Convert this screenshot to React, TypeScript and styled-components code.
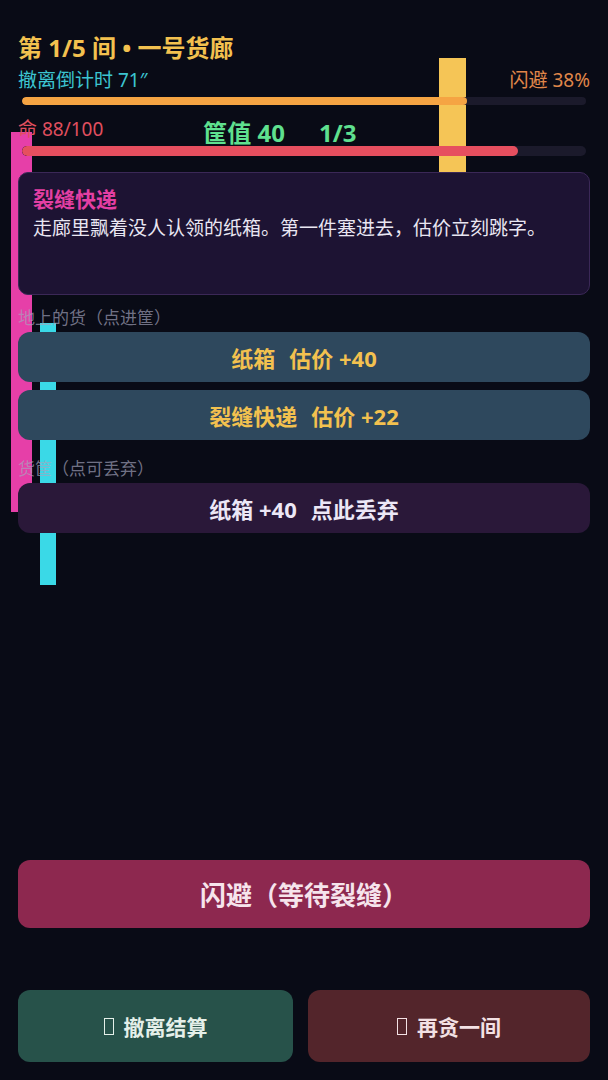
import React from "react";
import styled, { createGlobalStyle } from "styled-components";

const GlobalStyle = createGlobalStyle`
  html, body {
    margin: 0;
    padding: 0;
    background: #090b16;
  }
  body {
    font-family: "Noto Sans", "Noto Sans CJK SC", sans-serif;
    color: #e9e6f2;
  }
  * { box-sizing: border-box; }
`;

const Screen = styled.div`
  position: relative;
  min-height: 100vh;
  padding: 33px 18px 18px;
  display: flex;
  flex-direction: column;
  overflow: hidden;
`;

const Glitch = styled.div<{ $x: number; $y: number; $w: number; $h: number; $c: string }>`
  position: absolute;
  left: ${(p) => p.$x}px;
  top: ${(p) => p.$y}px;
  width: ${(p) => p.$w}px;
  height: ${(p) => p.$h}px;
  background: ${(p) => p.$c};
  z-index: 0;
`;

const Content = styled.div`
  position: relative;
  z-index: 1;
  display: flex;
  flex-direction: column;
  flex: 1;
`;

const Title = styled.h1`
  margin: 0;
  font-size: 24px;
  line-height: 30px;
  font-weight: 700;
  color: #f3c14f;
`;

const InfoRow = styled.div`
  margin-top: 4px;
  display: flex;
  justify-content: space-between;
  font-size: 19px;
  line-height: 26px;
`;

const InfoText = styled.span<{ $c: string }>`
  color: ${(p) => p.$c};
`;

const Track = styled.div<{ $h: number; $mt: number }>`
  margin: ${(p) => p.$mt}px 4px 0;
  height: ${(p) => p.$h}px;
  border-radius: ${(p) => p.$h / 2}px;
  background: #1b1a2b;
  overflow: hidden;
`;

const Fill = styled.div<{ $c: string }>`
  height: 100%;
  border-radius: inherit;
  background: ${(p) => p.$c};
`;

const StatsRow = styled.div`
  margin-top: 11px;
  display: flex;
  align-items: flex-end;
  gap: 100px;
`;

const Hp = styled.span`
  font-size: 19px;
  line-height: 26px;
  margin-bottom: 4px;
  color: #e04f5f;
`;

const Score = styled.span`
  font-size: 24px;
  line-height: 26px;
  font-weight: 700;
  color: #5fe08f;
  display: flex;
  gap: 34px;
`;

const Card = styled.section`
  margin-top: 16px;
  min-height: 123px;
  padding: 12px 14px;
  background: #1d1333;
  border: 1px solid #3b2857;
  border-radius: 10px;
`;

const CardTitle = styled.div`
  font-size: 21px;
  line-height: 28px;
  font-weight: 700;
  color: #e43fa3;
`;

const CardText = styled.div`
  margin-top: 2px;
  font-size: 19px;
  line-height: 26px;
  color: #e9e6f2;
`;

const Label = styled.div<{ $mt: number }>`
  margin-top: ${(p) => p.$mt}px;
  font-size: 17px;
  line-height: 22px;
  color: rgba(165, 165, 190, 0.68);
`;

const ItemList = styled.div`
  margin-top: 3px;
  display: flex;
  flex-direction: column;
  gap: 8px;
`;

const ItemButton = styled.button<{ $bg: string; $fg: string }>`
  height: 50px;
  border: none;
  border-radius: 12px;
  background: ${(p) => p.$bg};
  color: ${(p) => p.$fg};
  font-family: inherit;
  font-size: 22px;
  font-weight: 700;
  display: flex;
  align-items: center;
  justify-content: center;
  gap: 14px;
  cursor: pointer;
`;

const Spacer = styled.div`
  flex: 1;
`;

const DodgeButton = styled.button`
  height: 68px;
  border: none;
  border-radius: 12px;
  background: #8d284f;
  color: #f6e4ec;
  font-family: inherit;
  font-size: 26px;
  font-weight: 700;
  cursor: pointer;
`;

const BottomRow = styled.div`
  margin-top: 62px;
  display: grid;
  grid-template-columns: 275fr 282fr;
  gap: 15px;
`;

const ActionButton = styled.button<{ $bg: string; $fg: string }>`
  height: 72px;
  border: none;
  border-radius: 12px;
  background: ${(p) => p.$bg};
  color: ${(p) => p.$fg};
  font-family: inherit;
  font-size: 21px;
  font-weight: 700;
  display: flex;
  align-items: center;
  justify-content: center;
  cursor: pointer;
`;

const Tofu = styled.span`
  display: inline-block;
  width: 10px;
  height: 17px;
  border: 1.5px solid currentColor;
  margin-right: 10px;
`;

const ground = [
  { name: "纸箱", value: 40 },
  { name: "裂缝快递", value: 22 },
];

export default function App() {
  const timeLeft = 71;
  const timeMax = 90;
  const hp = 88;
  return (
    <>
      <GlobalStyle />
      <Screen>
        <Glitch $x={439} $y={58} $w={27} $h={140} $c="#f5c556" />
        <Glitch $x={11} $y={132} $w={21} $h={380} $c="#e63fa8" />
        <Glitch $x={40} $y={323} $w={16} $h={262} $c="#3ad9e7" />
        <Content>
          <Title>第 1/5 间 • 一号货廊</Title>
          <InfoRow>
            <InfoText $c="#3cc4d0">撤离倒计时 71″</InfoText>
            <InfoText $c="#e0874a">闪避 38%</InfoText>
          </InfoRow>
          <Track $h={8} $mt={4}>
            <Fill $c="#f5a443" style={{ width: `${(timeLeft / timeMax) * 100}%` }} />
          </Track>
          <StatsRow>
            <Hp>命 88/100</Hp>
            <Score>
              <span>筐值 40</span>
              <span>1/3</span>
            </Score>
          </StatsRow>
          <Track $h={10} $mt={0}>
            <Fill $c="#e64f5f" style={{ width: `${hp}%` }} />
          </Track>
          <Card>
            <CardTitle>裂缝快递</CardTitle>
            <CardText>走廊里飘着没人认领的纸箱。第一件塞进去，估价立刻跳字。</CardText>
          </Card>
          <Label $mt={12}>地上的货（点进筐）</Label>
          <ItemList>
            {ground.map((g) => (
              <ItemButton key={g.name} $bg="#2e485d" $fg="#f3c14f">
                <span>{g.name}</span>
                <span>估价 +{g.value}</span>
              </ItemButton>
            ))}
          </ItemList>
          <Label $mt={18}>货筐（点可丢弃）</Label>
          <ItemList>
            <ItemButton $bg="#2a1839" $fg="#ece7f6">
              <span>纸箱 +40</span>
              <span>点此丢弃</span>
            </ItemButton>
          </ItemList>
          <Spacer />
          <DodgeButton>闪避（等待裂缝）</DodgeButton>
          <BottomRow>
            <ActionButton $bg="#27524a" $fg="#e4efe9">
              <Tofu />
              撤离结算
            </ActionButton>
            <ActionButton $bg="#53252b" $fg="#f3e1e4">
              <Tofu />
              再贪一间
            </ActionButton>
          </BottomRow>
        </Content>
      </Screen>
    </>
  );
}
